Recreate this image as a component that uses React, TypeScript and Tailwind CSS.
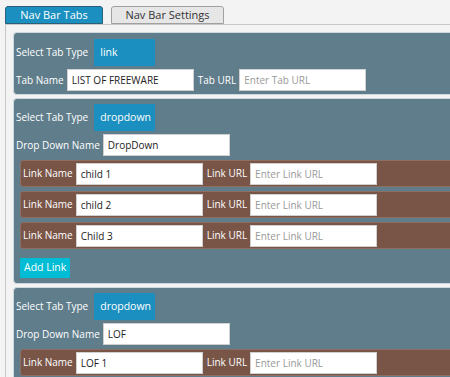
import React from "react";

const font = { fontFamily: '"Open Sans", "Liberation Sans", sans-serif' };

function Field({ value, placeholder }: { value?: string; placeholder?: string }) {
  return (
    <input
      readOnly
      value={value ?? ""}
      placeholder={placeholder}
      className="h-[22px] w-[127px] border border-[#d0d0d0] bg-white px-[4px] text-[10px] text-[#222] placeholder:text-[#999] outline-none"
    />
  );
}

function TypeBox({ label }: { label: string }) {
  return (
    <div className="flex h-[27px] w-[61px] items-center bg-[#1b8fc0] pl-[6px] text-[10.5px] text-white">{label}</div>
  );
}

function LinkRow({ name }: { name: string }) {
  return (
    <div className="flex h-[27px] items-center gap-[3px] rounded-[3px] border border-[#8d6e63] bg-[#795548] pl-[2px] text-white">
      <span className="text-[10px]">Link Name</span>
      <Field value={name} />
      <span className="ml-[1px] text-[10px]">Link URL</span>
      <Field placeholder="Enter Link URL" />
    </div>
  );
}

function DropCard({ name, links, addLink }: { name: string; links: string[]; addLink?: boolean }) {
  return (
    <div className="rounded-[4px] border border-[#cfd8dc] bg-[#607d8b] pl-[2px] pt-[5px] pb-[4px] text-white">
      <div className="flex items-center gap-[6px]">
        <span className="text-[10px]">Select Tab Type</span>
        <TypeBox label="dropdown" />
      </div>
      <div className="mt-[3px] flex items-center gap-[3px]">
        <span className="text-[10px]">Drop Down Name</span>
        <Field value={name} />
      </div>
      <div className="ml-[4px] mt-[4px] flex flex-col gap-[4px]">
        {links.map((l) => (
          <LinkRow key={l} name={l} />
        ))}
      </div>
      {addLink && (
        <button className="mb-[1px] ml-[4px] mt-[9px] h-[20px] bg-[#00bcd4] px-[4px] text-[10.5px] text-white">Add Link</button>
      )}
    </div>
  );
}

export default function App() {
  return (
    <div className="h-[377px] w-[450px] overflow-hidden bg-[#f3f3f3]" style={font}>
      <div className="flex gap-[8px] pl-[5px] pt-[6px]">
        <button className="h-[18px] w-[98px] rounded-t-[3px] border border-[#2b5f78] bg-[#1b8fc0] text-[11px] text-white">
          Nav Bar Tabs
        </button>
        <button className="h-[18px] w-[113px] rounded-t-[3px] border border-[#a0a0a0] bg-[#e6e6e6] text-[11px] text-[#333]">
          Nav Bar Settings
        </button>
      </div>
      <div className="ml-[5px] w-[470px] border-l border-t border-[#c8c8c8] pl-[7px] pt-[7px]">
        <div className="flex flex-col gap-[3px]">
          <div className="rounded-[4px] border border-[#cfd8dc] bg-[#607d8b] pl-[2px] pt-[6px] pb-[3px] text-white">
            <div className="flex items-center gap-[6px]">
              <span className="text-[10px]">Select Tab Type</span>
              <TypeBox label="link" />
            </div>
            <div className="mt-[3px] flex items-center gap-[3px]">
              <span className="text-[10px]">Tab Name</span>
              <Field value="LIST OF FREEWARE" />
              <span className="ml-[1px] text-[10px]">Tab URL</span>
              <Field placeholder="Enter Tab URL" />
            </div>
          </div>
          <DropCard name="DropDown" links={["child 1", "child 2", "Child 3"]} addLink />
          <DropCard name="LOF" links={["LOF 1"]} />
        </div>
      </div>
    </div>
  );
}
